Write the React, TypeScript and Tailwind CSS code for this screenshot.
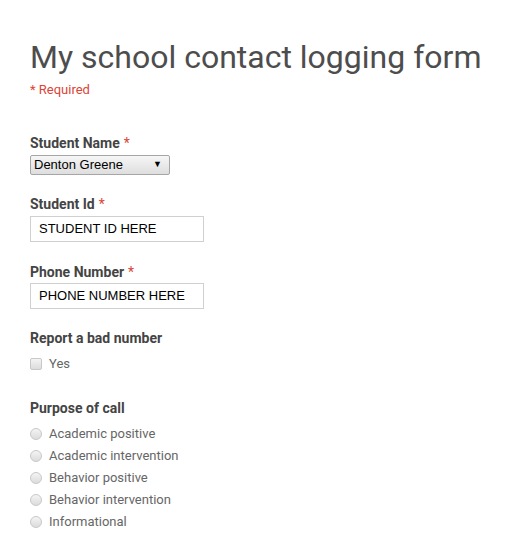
import React from "react";

const Label = ({ text, required }: { text: string; required?: boolean }) => (
  <div className="text-[14px] leading-[17px] font-bold text-[#444444]">
    {text}
    {required && <span className="text-[#db4437] font-normal ml-[4px]">*</span>}
  </div>
);

const Radio = ({ text }: { text: string }) => (
  <div className="flex items-center h-[22px] gap-[7px]">
    <span className="w-[12px] h-[12px] rounded-full border border-[#c8c8c8] bg-gradient-to-b from-[#f4f4f4] to-[#dcdcdc] shrink-0" />
    <span className="text-[13px] text-[#666666] leading-[16px]">{text}</span>
  </div>
);

export default function App() {
  return (
    <div className="bg-white min-h-[542px] w-[513px] px-[30px] pt-[39px] font-['Roboto',sans-serif]">
      <h1 className="text-[32px] leading-[37px] text-[#4d4d4d] font-normal">My school contact logging form</h1>
      <div className="text-[13px] leading-[16px] text-[#db4437] mt-[6px]">* Required</div>

      <div className="mt-[37px]">
        <Label text="Student Name" required />
        <div className="mt-[3px] w-[140px] h-[20px] border border-[#a6a6a6] rounded-[2px] bg-gradient-to-b from-[#f6f6f6] to-[#dedede] flex items-center justify-between pl-[3px] pr-[7px] font-['Liberation_Sans',sans-serif] text-[13px] text-black">
          <span>Denton Greene</span>
          <span className="text-[9px]">▼</span>
        </div>
      </div>

      <div className="mt-[21px]">
        <Label text="Student Id" required />
        <div className="mt-[3px] w-[174px] h-[26px] border border-[#d0d0d0] flex items-center pl-[8px] font-['Liberation_Sans',sans-serif] text-[13px] text-black">
          STUDENT ID HERE
        </div>
      </div>

      <div className="mt-[22px]">
        <Label text="Phone Number" required />
        <div className="mt-[2px] w-[174px] h-[26px] border border-[#d0d0d0] flex items-center pl-[8px] font-['Liberation_Sans',sans-serif] text-[13px] text-black">
          PHONE NUMBER HERE
        </div>
      </div>

      <div className="mt-[21px]">
        <Label text="Report a bad number" />
        <div className="mt-[7px] flex items-center h-[20px] gap-[7px]">
          <span className="w-[12px] h-[12px] rounded-[2px] border border-[#c8c8c8] bg-gradient-to-b from-[#f4f4f4] to-[#dcdcdc] shrink-0" />
          <span className="text-[13px] text-[#666666] leading-[16px]">Yes</span>
        </div>
      </div>

      <div className="mt-[26px]">
        <Label text="Purpose of call" />
        <div className="mt-[6px] flex flex-col">
          <Radio text="Academic positive" />
          <Radio text="Academic intervention" />
          <Radio text="Behavior positive" />
          <Radio text="Behavior intervention" />
          <Radio text="Informational" />
        </div>
      </div>
    </div>
  );
}
